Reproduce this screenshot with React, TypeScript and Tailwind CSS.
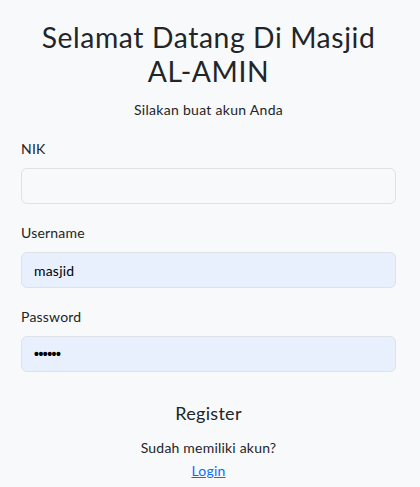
import React from "react";

function Field({ label, value, filled = false, dots = false }: { label: string; value?: string; filled?: boolean; dots?: boolean }) {
  return (
    <div className="mb-[18px]">
      <label className="block text-[14px] leading-[21px] mb-[9px] tracking-[0.2px]">{label}</label>
      <input
        type="text"
        readOnly
        value={value ?? ""}
        className={
          "block w-full h-[36px] rounded-[6px] border border-[#dee2e6] px-[12px] text-[14px] text-black outline-none " +
          (filled ? "bg-[#e8f0fe] " : "bg-[#f8f9fa] ") +
          (dots ? "font-['Liberation_Sans',sans-serif] font-bold tracking-[-0.5px]" : "tracking-[0.2px]")
        }
      />
    </div>
  );
}

export default function App() {
  return (
    <div className="min-h-screen bg-[#f8f9fa] pl-[21px] pr-[24px] pt-[20px] font-['Lato',sans-serif] text-[#212529]">
      <h1 className="text-center text-[28.3px] leading-[34px] font-normal tracking-[0.6px]">
        Selamat Datang Di Masjid
        <br />
        AL-AMIN
      </h1>
      <p className="mt-[11px] text-center text-[14px] leading-[21px] tracking-[0.3px]">Silakan buat akun Anda</p>
      <form className="mt-[18px]" onSubmit={(e) => e.preventDefault()}>
        <Field label="NIK" />
        <Field label="Username" value="masjid" filled />
        <Field label="Password" value="••••••" filled dots />
        <div className="flex flex-col items-center pt-[10px]">
          <button type="submit" className="text-[18px] leading-[27px] tracking-[0.3px]">
            Register
          </button>
          <p className="mt-[10px] text-[14px] leading-[21px] tracking-[0.2px]">Sudah memiliki akun?</p>
          <a href="#" className="mt-[2px] text-[14px] leading-[21px] text-[#0d6efd] underline tracking-[0.2px]">
            Login
          </a>
        </div>
      </form>
    </div>
  );
}
